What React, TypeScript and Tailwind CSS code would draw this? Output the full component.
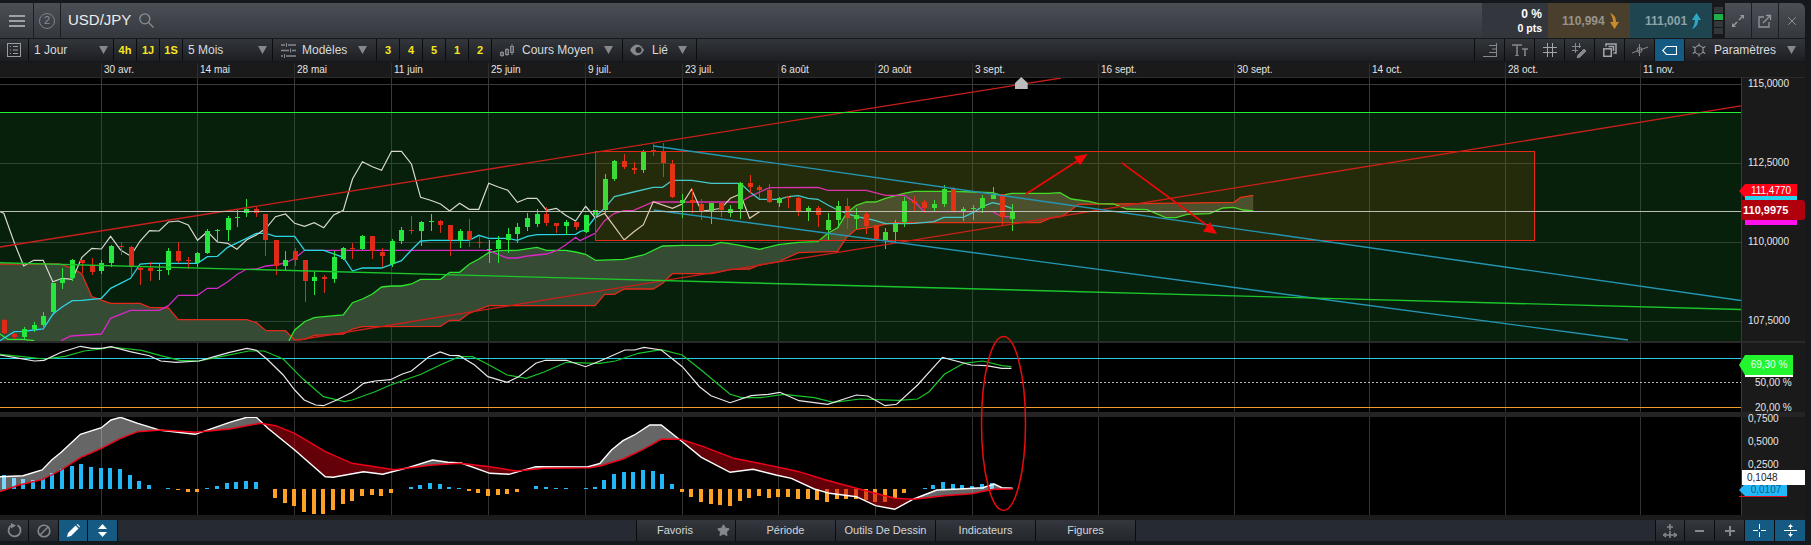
import React from "react";
import { Star, X } from "lucide-react";

type P = number[][];
const z3 = (p: P) => p.map(([x, y]) => [x / 2.613, y / 3 + 130]);
const z4 = (p: P) => p.map(([x, y]) => [x / 2.24 + 580, y / 3 + 130]);
const z6 = (p: P) => p.map(([x, y]) => [x / 2.613, y / 3 + 335]);
const z7 = (p: P) => p.map(([x, y]) => [x / 2.613 + 600, y / 3 + 335]);
const str = (p: P) => p.map(([x, y]) => `${x.toFixed(1)},${y.toFixed(1)}`).join(" ");

const gridX = [101, 197, 294, 391, 488, 585, 682, 778, 875, 972, 1098, 1234, 1369, 1505, 1640];
const dates = ["30 avr.", "14 mai", "28 mai", "11 juin", "25 juin", "9 juil.", "23 juil.", "6 août", "20 août", "3 sept.", "16 sept.", "30 sept.", "14 oct.", "28 oct.", "11 nov."];

// [x, wickTop, bodyTop, bodyBot, wickBot, isGreen]
const c3: number[][] = [
  [11,568,570,610,612,0],[37,608,612,622,628,0],[62,590,598,622,626,1],[88,577,585,598,605,1],[113,545,558,586,592,1],[138,459,459,545,555,1],[163,415,446,458,477,1],[189,388,390,445,452,1],[214,390,390,400,428,0],[240,385,404,426,435,0],[265,390,400,424,432,1],[289,345,348,400,411,1],[315,337,348,351,375,0],[341,349,351,412,438,0],[366,410,414,419,465,0],[391,397,414,423,453,0],[416,402,420,422,450,1],[440,354,363,420,435,1],[466,336,363,393,400,0],[492,381,390,393,417,0],[516,367,369,400,412,1],[542,298,304,370,373,1],[568,297,299,301,336,1],[595,258,264,300,333,1],[619,240,262,264,290,1],[644,207,237,248,261,1],[670,230,238,251,261,0],[693,252,252,330,378,0],[720,330,330,408,435,0],[746,363,390,408,422,1],[770,355,363,390,408,0],[796,390,390,453,516,0],[821,427,442,453,495,1],[846,435,441,446,489,0],[872,363,381,447,459,1],[897,350,354,388,390,1],[921,339,354,357,387,0],[947,315,318,358,360,1],[973,318,318,364,387,0],[997,355,366,378,412,0],[1023,327,333,402,411,1],[1049,291,300,333,342,1],[1075,258,300,303,312,0],[1099,273,276,303,348,1],[1125,252,273,275,303,1],[1151,270,273,285,309,0],[1175,285,285,330,378,0],[1201,297,303,330,354,1],[1226,267,303,330,351,0],[1251,318,336,339,354,0],[1277,330,358,360,398,1],[1302,318,330,357,399,1],[1327,294,312,330,369,1],[1352,280,291,312,339,1],[1378,250,264,291,303,1],[1403,237,252,282,291,1],[1428,232,252,279,288,0],[1454,279,279,288,309,0],[1478,270,276,288,315,1],[1504,276,276,291,300,0],[1530,255,255,306,309,1],[1556,240,240,255,270,1],
];
const c4: number[][] = [
  [55,132,148,240,248,1],[77,90,93,148,154,1],[99,72,93,110,118,0],[120,96,114,120,132,0],[142,60,66,120,129,1],[164,40,60,66,78,0],[185,38,66,100,140,0],[207,90,102,202,205,0],[229,192,210,218,265,1],[250,178,210,220,250,0],[272,208,222,243,270,0],[294,218,220,243,282,1],[316,218,218,238,262,0],[337,225,236,248,262,1],[359,155,160,238,268,1],[380,135,160,172,190,0],[402,165,172,180,205,0],[424,163,180,215,220,0],[445,200,204,220,232,1],[467,198,200,202,235,0],[489,200,204,244,258,0],[511,228,234,244,272,1],[533,228,234,255,290,0],[555,248,270,300,330,1],[577,212,228,270,295,1],[597,205,228,265,296,0],[619,235,254,265,298,1],[641,245,252,288,312,0],[662,285,286,328,332,0],[684,293,306,330,358,1],[706,270,282,306,335,1],[726,200,213,275,290,1],[749,197,213,218,245,0],[771,210,216,234,248,0],[793,210,222,234,245,1],[815,165,178,222,230,1],[836,170,178,245,248,0],[858,230,238,244,272,1],[880,226,234,237,270,1],[901,195,204,234,250,1],[924,170,194,205,208,1],[945,192,192,262,288,0],[967,222,245,265,303,1],
];

const whiteLag = [...z3([[0,245],[10,250],[38,340],[62,408],[88,391],[113,391],[138,455],[163,445],[189,448],[214,382],[240,355],[265,357],[289,319],[315,360],[341,378],[366,333],[391,302],[416,303],[440,276],[466,273],[492,285],[516,331],[542,305],[568,336],[595,340],[619,358],[644,330],[670,315],[695,295],[720,260],[746,252],[770,280],[796,289],[821,278],[846,293],[872,255],[897,241],[921,147],[947,95],[973,110],[997,121],[1023,64],[1049,64],[1075,102],[1099,202],[1125,211],[1151,222],[1175,243],[1201,220],[1226,238],[1251,238],[1277,160],[1302,171],[1327,181],[1352,217],[1378,205],[1403,205],[1428,241],[1454,235],[1478,256],[1504,273],[1530,229]]), ...z4([[12,228],[34,263],[55,250],[77,290],[99,330],[120,306],[142,284],[164,215],[207,235],[229,222],[250,178],[272,243],[294,240],[316,235],[337,205],[359,192],[380,265],[402,245]])];
const cyan = [...z3([[0,632],[37,605],[62,604],[88,600],[113,597],[138,553],[163,530],[189,512],[214,511],[265,505],[289,475],[315,460],[341,445],[366,402],[391,400],[516,400],[542,380],[568,379],[595,352],[644,325],[670,310],[695,310],[720,319],[770,319],[796,361],[846,361],[897,382],[921,423],[947,414],[997,414],[1023,403],[1049,392],[1075,360],[1099,333],[1125,331],[1226,331],[1251,316],[1277,325],[1327,325],[1352,331],[1378,319],[1403,314],[1504,313]]), ...z4([[0,305],[12,300],[34,262],[55,235],[77,200],[120,186],[164,172],[185,172],[207,151],[250,151],[294,160],[359,160],[380,185],[402,208],[445,208],[467,200],[489,197],[511,205],[533,208],[555,225],[577,240],[597,250],[619,260],[641,265],[662,272],[684,281],[726,281],[749,280],[793,275],[815,262],[858,262],[880,248],[901,230],[924,218],[945,224],[967,235]])];
const magenta = [...z3([[160,632],[185,618],[265,612],[289,565],[341,541],[416,541],[440,527],[466,496],[516,496],[542,475],[568,475],[595,455],[620,433],[644,418],[670,417],[695,408],[720,405],[746,399],[770,385],[796,361],[1277,361],[1302,374],[1327,384],[1352,384],[1378,378],[1428,372],[1454,362],[1478,345],[1504,322]]), ...z4([[0,332],[34,310],[55,272],[77,250],[99,242],[120,241],[164,216],[359,216],[380,200],[424,173],[533,172],[555,181],[641,181],[684,196],[726,196],[749,215],[771,245],[924,245],[945,260],[967,260]])];
const spanA0 = z3([[0,612],[20,628],[60,628],[90,632]]);
const spanA = [...z3([[755,632],[770,600],[796,575],[821,563],[846,560],[897,555],[921,518],[947,507],[973,492],[997,471],[1023,468],[1049,468],[1075,462],[1099,448],[1151,448],[1175,427],[1201,427],[1226,403],[1251,387],[1277,368],[1302,362],[1352,361],[1403,352],[1428,361],[1478,361],[1504,366],[1530,373],[1556,391]]), ...z4([[34,391],[99,388],[142,375],[185,348],[229,346],[294,346],[316,337],[359,346],[402,358],[445,344],[489,337],[533,335],[555,310],[577,293],[597,250],[619,226],[641,216],[662,216],[684,205],[726,190],[749,184],[836,184],[880,186],[924,188],[945,196],[967,190],[1050,190],[1075,188],[1100,207],[1140,214],[1161,221],[1195,222],[1225,237],[1270,239],[1312,263],[1335,263],[1360,253],[1410,251],[1440,234],[1465,232],[1485,240],[1508,243]])];
const spanB0 = z3([[0,402],[155,402],[190,415],[214,432],[240,500],[289,520],[366,520],[391,532],[440,534],[466,569],[645,569],[670,578],[695,602],[746,602],[770,630]]);
const spanB = [...z3([[770,630],[796,628],[821,616],[897,612],[921,597],[947,590],[1151,589],[1175,571],[1201,571],[1226,550],[1277,527],[1556,527]]), ...z4([[34,527],[55,493],[77,493],[99,477],[164,477],[185,460],[207,431],[294,431],[316,425],[337,418],[380,417],[402,405],[445,395],[489,368],[577,364],[597,322],[619,298],[662,290],[684,282],[706,278],[1030,278],[1055,264],[1080,259],[1117,223],[1465,217],[1480,202],[1508,196]])];

const stochW = [...z6([[0,60],[40,68],[90,78],[115,76],[160,52],[210,34],[240,40],[265,40],[290,35],[340,50],[390,62],[420,78],[460,82],[520,78],[560,65],[600,52],[645,40],[670,46],[700,75],[740,120],[770,165],[795,195],[825,210],[845,212],[880,195],[920,172],[950,145],[980,138],[1020,134],[1050,118],[1075,108],[1120,66],[1150,51],[1175,61],[1200,62],[1240,90],[1275,125],[1325,142],[1355,125],[1400,85],[1425,76],[1480,76],[1530,95]]), ...z7([[0,78],[65,45],[90,45],[115,37],[160,45],[215,95],[260,155],[290,182],[340,203],[395,182],[440,178],[470,172],[520,197],[595,208],[670,180],[700,183],[745,212],[775,208],[830,150],[895,67],[970,90],[1010,92],[1050,100],[1075,100]])];
const stochG = [...z6([[0,58],[60,65],[115,72],[170,64],[220,48],[265,42],[290,36],[370,46],[420,62],[470,76],[520,78],[590,62],[650,48],[690,48],[740,72],[790,130],[845,185],[900,200],[920,195],[980,170],[1020,150],[1100,118],[1150,90],[1200,65],[1235,65],[1270,85],[1325,120],[1375,130],[1420,112],[1480,82],[1560,85]]), ...z7([[0,85],[40,78],[100,55],[160,44],[215,60],[270,110],[340,178],[370,188],[420,188],[480,178],[560,188],[610,202],[680,192],[780,196],[830,192],[860,170],[900,118],[950,85],[1000,78],[1050,92],[1075,95]])];
const macdW = [...z6([[0,425],[60,422],[110,405],[135,375],[160,352],[210,298],[265,278],[290,255],[315,247],[360,265],[420,286],[510,298],[600,262],[645,247],[670,247],[700,280],[770,345],[850,425],[870,427],[950,410],[1000,418],[1060,400],[1130,375],[1170,382],[1205,384],[1280,415],[1330,418],[1400,395],[1535,396]]), ...z7([[0,385],[30,345],[60,317],[90,300],[130,270],[160,270],[215,320],[265,367],[340,412],[400,403],[460,420],[500,430],[560,462],[600,475],[670,485],[720,512],[770,523],[820,492],[880,465],[940,462],[1000,458],[1030,447],[1050,458],[1078,460]])];
const macdR = [...z6([[0,470],[50,450],[110,434],[160,405],[210,368],[265,340],[315,310],[360,290],[420,285],[510,292],[600,282],[680,265],[720,272],[770,295],[850,350],[920,385],[1030,404],[1130,390],[1200,385],[1280,395],[1350,408],[1420,400],[1540,398]]), ...z7([[0,393],[60,372],[110,345],[160,313],[210,313],[270,335],[350,370],[460,395],[520,410],[590,435],[670,460],[770,490],[820,493],[900,482],[970,476],[1030,463],[1078,462]])];

const barsA: number[][] = [[11,420],[37,429],[60,432],[86,436],[112,432],[137,414],[163,402],[188,393],[212,387],[238,396],[265,399],[288,399],[314,402],[340,420],[364,438],[390,450],[440,459],[465,465],[492,471],[516,471],[541,459],[567,453],[593,444],[617,441],[643,438],[669,441],[718,489],[745,504],[769,513],[795,531],[820,537],[845,537],[870,525],[896,507],[920,498],[946,483],[972,480],[996,483],[1022,474],[1074,456],[1098,450],[1124,444],[1150,447],[1174,456],[1200,459],[1226,468],[1250,474],[1276,483],[1302,480],[1325,477],[1351,471],[1401,453],[1427,456],[1453,459],[1478,459],[1530,459],[1556,456]];
const barsB: number[][] = [[11,435],[36,417],[62,411],[86,411],[112,405],[138,408],[162,417],[188,447],[214,471],[238,486],[264,501],[290,507],[314,510],[340,513],[366,498],[390,489],[416,483],[442,489],[466,486],[492,486],[518,492],[544,492],[568,495],[594,501],[620,492],[644,492],[670,492],[694,495],[718,501],[744,501],[770,489],[794,474],[848,459],[870,450],[896,441],[922,447],[946,450],[972,453],[998,447],[1024,444]];

function Candles({ data, sx, ox }: { data: number[][]; sx: number; ox: number }) {
  return (
    <g shapeRendering="crispEdges">
      {data.map(([x, wt, bt, bb, wb, g], i) => {
        const cx = Math.round(x / sx + ox);
        const col = g ? "#24e83e" : "#e02a18";
        const by = Math.round(bt / 3 + 130);
        return (
          <g key={i} fill={col}>
            <rect x={cx} y={wt / 3 + 130} width={1} height={(wb - wt) / 3} />
            <rect x={cx - 2} y={by} width={5} height={Math.max(1, Math.round((bb - bt) / 3))} />
          </g>
        );
      })}
    </g>
  );
}

function Bars({ data, sx, ox }: { data: number[][]; sx: number; ox: number }) {
  const zero = 462;
  return (
    <g shapeRendering="crispEdges">
      {data.map(([x, t], i) => {
        const up = t < zero;
        const h = Math.max(1, Math.round(Math.abs(zero - t) / 3));
        const cx = Math.round(x / sx + ox);
        return <rect key={i} x={cx - 2} width={4} y={up ? 489 - h : 489} height={h} fill={up ? "#22b8f8" : "#ffa126"} />;
      })}
    </g>
  );
}

function Grid({ y1, y2, color }: { y1: number; y2: number; color: string }) {
  return (
    <g shapeRendering="crispEdges">
      {gridX.map((x) => (
        <line key={x} x1={x + 0.5} x2={x + 0.5} y1={y1} y2={y2} stroke={color} />
      ))}
    </g>
  );
}

function MainChart() {
  const cloud1 = [...spanB0, [spanB0[spanB0.length - 1][0], 341], [0, 341]];
  const cloud2 = [...spanA, ...[...spanB].reverse()];
  return (
    <svg width={1741} height={263} viewBox="0 78 1741 263" className="block shrink-0">
      <rect x={0} y={78} width={1741} height={35} fill="#000" />
      <rect x={0} y={113} width={1741} height={228} fill="#06200c" />
      <Grid y1={78} y2={113} color="#3a3a3a" />
      <Grid y1={113} y2={341} color="#2c4431" />
      <g shapeRendering="crispEdges">
        <line x1={0} x2={1741} y1={84.5} y2={84.5} stroke="#3a3a3a" />
        {[163, 242, 321].map((y) => (
          <line key={y} x1={0} x2={1741} y1={y + 0.5} y2={y + 0.5} stroke="#2c4431" />
        ))}
      </g>
      <polygon points={str(cloud1)} fill="#354b34" />
      <polygon points={str(cloud2)} fill="#354b34" />
      <polyline points={str(spanB0)} fill="none" stroke="#e32a1a" strokeWidth={1.3} />
      <polyline points={str(spanB)} fill="none" stroke="#e32a1a" strokeWidth={1.3} />
      <polyline points={str(spanA0)} fill="none" stroke="#2ee62e" strokeWidth={1.3} />
      <polyline points={str(spanA)} fill="none" stroke="#2ee62e" strokeWidth={1.3} />
      <polyline points={str(magenta)} fill="none" stroke="#d828c8" strokeWidth={1.3} />
      <polyline points={str(cyan)} fill="none" stroke="#2cd4e4" strokeWidth={1.3} />
      <polyline points={str(whiteLag)} fill="none" stroke="#d8d8d0" strokeWidth={1.2} />
      <Candles data={c3} sx={2.613} ox={0} />
      <Candles data={c4} sx={2.24} ox={580} />
      <rect x={595.5} y={151.5} width={939} height={89} fill="#ff7a00" fillOpacity={0.12} stroke="#e5281a" strokeWidth={1} shapeRendering="crispEdges" />
      <line x1={0} y1={247} x2={1061} y2={78} stroke="#c8201a" strokeWidth={1.3} />
      <line x1={298} y1={340} x2={1741} y2={105.8} stroke="#c8201a" strokeWidth={1.3} />
      <line x1={653.7} y1={146} x2={1741} y2={300.5} stroke="#2496b4" strokeWidth={1.4} />
      <line x1={653.7} y1={210} x2={1628} y2={340} stroke="#2496b4" strokeWidth={1.4} />
      <line x1={0} y1={262.7} x2={1741} y2={309.5} stroke="#1cc62c" strokeWidth={1.4} />
      <line x1={0} x2={1741} y1={112.5} y2={112.5} stroke="#22f034" strokeWidth={1} shapeRendering="crispEdges" />
      <line x1={0} x2={1741} y1={211.5} y2={211.5} stroke="#bdbdb5" strokeWidth={1} shapeRendering="crispEdges" />
      <g stroke="#f00808" strokeWidth={1.6} fill="#f00808">
        <line x1={1026} y1={194} x2={1082} y2={158} />
        <polygon points="1087.6,154 1074,156.5 1080,165.5" stroke="none" />
        <line x1={1121.5} y1={162.7} x2={1212} y2={229} />
        <polygon points="1217,234 1203,231.5 1210,222" stroke="none" />
      </g>
    </svg>
  );
}

function StochChart() {
  return (
    <svg width={1741} height={69} viewBox="0 343 1741 69" className="block shrink-0">
      <rect x={0} y={343} width={1741} height={69} fill="#000" />
      <Grid y1={343} y2={412} color="#333" />
      <g shapeRendering="crispEdges">
        <line x1={0} x2={1741} y1={358.5} y2={358.5} stroke="#27cfe0" />
        <line x1={0} x2={1741} y1={382.5} y2={382.5} stroke="#b8b8b8" strokeDasharray="2 2" />
        <line x1={0} x2={1741} y1={407.5} y2={407.5} stroke="#f39a2a" />
      </g>
      <polyline points={str(stochG)} fill="none" stroke="#18c62a" strokeWidth={1.2} />
      <polyline points={str(stochW)} fill="none" stroke="#e8e8e8" strokeWidth={1.2} />
    </svg>
  );
}

function MacdChart() {
  const area = [...macdW, ...[...macdR].reverse()];
  const above = [...macdR, [1741, macdR[macdR.length - 1][1]], [1741, 417], [0, 417]];
  const below = [...macdR, [1741, macdR[macdR.length - 1][1]], [1741, 515], [0, 515]];
  return (
    <svg width={1741} height={98} viewBox="0 417 1741 98" className="block shrink-0">
      <defs>
        <clipPath id="macd-above"><polygon points={str(above)} /></clipPath>
        <clipPath id="macd-below"><polygon points={str(below)} /></clipPath>
      </defs>
      <rect x={0} y={417} width={1741} height={98} fill="#000" />
      <Grid y1={417} y2={515} color="#333" />
      <Bars data={barsA} sx={2.613} ox={0} />
      <Bars data={barsB} sx={2.613} ox={600} />
      <polygon points={str(area)} fill="#ffffff" fillOpacity={0.4} clipPath="url(#macd-above)" />
      <polygon points={str(area)} fill="#c00010" fillOpacity={0.52} clipPath="url(#macd-below)" />
      <polyline points={str(macdW)} fill="none" stroke="#fff" strokeWidth={1.4} />
      <polyline points={str(macdR)} fill="none" stroke="#f00018" strokeWidth={1.4} />
    </svg>
  );
}

const Tri = () => (
  <svg width="9" height="8" viewBox="0 0 9 8" className="shrink-0"><polygon points="0,0 9,0 4.5,8" fill="#85888c" /></svg>
);

const toolBg = "bg-linear-to-b from-[#33363b] to-[#1c1e22]";

function Yel({ t, w }: { t: string; w: string }) {
  return (
    <div className={`${w} h-full flex items-center justify-center text-[11px] font-bold text-[#f5e61e] border-r border-[#0b0c0e]`}>{t}</div>
  );
}

function IconCell({ children, blue }: { children: React.ReactNode; blue?: boolean }) {
  return (
    <div className={`w-[30px] h-full flex items-center justify-center border-l border-[#0b0c0e] ${blue ? "bg-[#155a82]" : ""}`}>{children}</div>
  );
}

function Header() {
  return (
    <div className="h-[35px] flex rounded-tr-[6px] overflow-hidden bg-linear-to-b from-[#4b4f56] to-[#34383e]">
      <div className="w-[34px] flex items-center justify-center border-r border-[#1c1e22]">
        <div className="w-[16px] flex flex-col gap-[3px]">
          <div className="h-[2px] bg-[#9ea0a3]" />
          <div className="h-[2px] bg-[#9ea0a3]" />
          <div className="h-[2px] bg-[#9ea0a3]" />
        </div>
      </div>
      <div className="w-[27px] flex items-center justify-center border-r border-[#1c1e22]">
        <div className="w-[16px] h-[16px] rounded-full border-[1.5px] border-[#808285] flex items-center justify-center text-[11px] text-[#8a8d90]">2</div>
      </div>
      <div className="pl-[7px] flex items-center text-[15px] text-[#eceded]">USD/JPY</div>
      <div className="pl-[8px] flex items-center">
        <svg width="15" height="15" viewBox="0 0 15 15" fill="none" stroke="#8c8f93" strokeWidth="1.3"><circle cx="5.8" cy="5.8" r="5" /><path d="M9.4 9.4L14.5 14.5" /></svg>
      </div>
      <div className="flex-1" />
      <div className="w-[66px] bg-[#33373d] flex flex-col items-end justify-center pr-[6px] font-bold text-white leading-[14px]">
        <div className="text-[12px]">0 %</div>
        <div className="text-[10.5px]">0 pts</div>
      </div>
      <div className="w-[82px] bg-[#4a3e2c] flex items-center pl-[14px] gap-[4px] text-[12px] font-bold text-[#97938a]">
        110,994
        <svg width="11" height="16" viewBox="0 0 11 16"><path d="M1 0C6 2 7 5 7 9H10L5.5 16L1 9H4C4 6 3 3 1 0Z" fill="#c98a2c" /></svg>
      </div>
      <div className="w-[82px] bg-[#1f4650] flex items-center pl-[15px] gap-[4px] text-[12px] font-bold text-[#8ea2a8]">
        111,001
        <svg width="11" height="16" viewBox="0 0 11 16"><path d="M1 16C6 14 7 11 7 7H10L5.5 0L1 7H4C4 10 3 13 1 16Z" fill="#2ea8c6" /></svg>
      </div>
      <div className="w-[13px] bg-[#16181b] flex flex-col justify-center gap-px px-[2px]">
        <div className="h-[6px] bg-[#33373c]" />
        <div className="h-[6px] bg-[#1fb04c]" />
        <div className="h-[6px] bg-[#33373c]" />
        <div className="h-[6px] bg-[#33373c]" />
      </div>
      <div className="w-[27px] flex items-center justify-center border-r border-[#1c1e22]">
        <svg width="14" height="14" viewBox="0 0 14 14" stroke="#94979b" strokeWidth="1.6" fill="#94979b"><line x1="8" y1="6" x2="12" y2="2" /><polygon points="9,1 13,1 13,5" stroke="none" /><line x1="6" y1="8" x2="2" y2="12" /><polygon points="1,9 1,13 5,13" stroke="none" /></svg>
      </div>
      <div className="w-[27px] flex items-center justify-center border-r border-[#1c1e22]">
        <svg width="14" height="14" viewBox="0 0 14 14" stroke="#94979b" strokeWidth="1.3" fill="none"><path d="M6 3H1V13H11V8" /><path d="M5 9L12 2" /><path d="M8 1.5H12.5V6" /></svg>
      </div>
      <div className="w-[26px] flex items-center justify-center"><X size={14} color="#94979b" strokeWidth={1.6} /></div>
    </div>
  );
}

function Toolbar() {
  return (
    <div className={`mt-px h-[22px] flex items-center text-[12px] text-[#d8dadb] ${toolBg}`}>
      <div className="w-[29px] h-full flex items-center justify-center border-r border-[#0b0c0e]">
        <svg width="14" height="14" viewBox="0 0 14 14" fill="none" stroke="#999c9f"><rect x="0.5" y="0.5" width="13" height="13" /><path d="M3 3.5H4M6 3.5H11M3 7H4M6 7H11M3 10.5H4M6 10.5H11" /></svg>
      </div>
      <div className="w-[85px] h-full flex items-center justify-between pl-[5px] pr-[5px] border-r border-[#0b0c0e]"><span>1 Jour</span><Tri /></div>
      <Yel t="4h" w="w-[23px]" />
      <Yel t="1J" w="w-[23px]" />
      <Yel t="1S" w="w-[23px]" />
      <div className="w-[90px] h-full flex items-center justify-between pl-[5px] pr-[5px] border-r border-[#0b0c0e]"><span>5 Mois</span><Tri /></div>
      <div className="w-[104px] h-full flex items-center pl-[8px] border-r border-[#0b0c0e]">
        <svg width="15" height="15" viewBox="0 0 15 15" stroke="#85888c" strokeWidth="1.5" fill="none"><path d="M0 2H4M7 2H15M0 7.5H8M11 7.5H15M0 13H2M5 13H15" /><path d="M5.5 0V4M9.5 5.5V9.5M3.5 11V15" strokeWidth="1" /></svg>
        <span className="ml-[6px]">Modèles</span>
        <span className="ml-[11px]"><Tri /></span>
      </div>
      <Yel t="3" w="w-[23px]" />
      <Yel t="4" w="w-[23px]" />
      <Yel t="5" w="w-[23px]" />
      <Yel t="1" w="w-[23px]" />
      <Yel t="2" w="w-[23px]" />
      <div className="w-[131px] h-full flex items-center pl-[8px] border-r border-[#0b0c0e]">
        <svg width="15" height="15" viewBox="0 0 15 15" stroke="#85888c" fill="none"><rect x="0.5" y="9.5" width="3" height="3" /><path d="M2 8V14M7 5V13M12 1V12" /><rect x="5.5" y="6.5" width="3" height="5" /><rect x="10.5" y="3.5" width="3" height="6" /></svg>
        <span className="ml-[7px]">Cours Moyen</span>
        <span className="ml-[11px]"><Tri /></span>
      </div>
      <div className="w-[74px] h-full flex items-center pl-[7px] border-r border-[#0b0c0e]">
        <svg width="14" height="12" viewBox="0 0 14 12"><path d="M0 6C2 2 5 0.5 7 0.5C10 0.5 12.5 3 14 6C12.5 9 10 11.5 7 11.5C5 11.5 2 10 0 6Z" fill="#85888c" /><circle cx="8.5" cy="6" r="3" fill="#26282c" /></svg>
        <span className="ml-[8px]">Lié</span>
        <span className="ml-[10px]"><Tri /></span>
      </div>
      <div className="flex-1" />
      <IconCell>
        <svg width="14" height="14" viewBox="0 0 14 14" stroke="#85888c" fill="none"><path d="M0 13.5H14M13.5 0V13M6 2.5H13M9 6H13M6 9.5H13" /></svg>
      </IconCell>
      <IconCell>
        <svg width="16" height="12" viewBox="0 0 16 12" stroke="#85888c" strokeWidth="1.5" fill="none"><path d="M0 1H10M5 1V12M3 12H7M10 5H16M13 5V12M12 12H14" /></svg>
      </IconCell>
      <IconCell>
        <svg width="14" height="14" viewBox="0 0 14 14" stroke="#a4a7aa" fill="none"><path d="M0 4.5H14M0 9.5H14M4.5 0V14M9.5 0V14" /></svg>
      </IconCell>
      <IconCell>
        <svg width="15" height="15" viewBox="0 0 15 15" stroke="#85888c" fill="none"><path d="M0 3.5H9M0 7.5H6M3.5 0V10M7.5 0V5" /><path d="M6 12L12 6L14 8L8 14L5 15Z" fill="#85888c" /></svg>
      </IconCell>
      <IconCell>
        <svg width="14" height="14" viewBox="0 0 14 14" stroke="#a4a7aa" strokeWidth="1.5" fill="none"><rect x="0.8" y="5.8" width="7.5" height="7.5" /><path d="M3 3.5V1H13V10H10.5" /><path d="M5.5 3.5H10.5V8" /></svg>
      </IconCell>
      <IconCell>
        <svg width="16" height="13" viewBox="0 0 16 13" stroke="#85888c" fill="none"><path d="M0 9L16 3" /><circle cx="7.5" cy="6" r="2.5" /><path d="M7.5 0V12" /></svg>
      </IconCell>
      <IconCell blue>
        <svg width="15" height="9" viewBox="0 0 15 9" stroke="#fff" strokeWidth="1.1" fill="none"><path d="M14.5 0.5H4.5L0.7 4.5L4.5 8.5H14.5Z" /></svg>
      </IconCell>
      <div className="w-[121px] h-full flex items-center pl-[7px] border-l border-[#0b0c0e]">
        <svg width="14" height="14" viewBox="0 0 16 16" stroke="#9a9da0" strokeWidth="1.3" fill="none"><circle cx="8" cy="8" r="4.8" /><path d="M8 0.5V3M8 13V15.5M0.8 4L3.4 5.5M12.6 10.5L15.2 12M0.8 12L3.4 10.5M12.6 5.5L15.2 4" /></svg>
        <span className="ml-[8px]">Paramètres</span>
        <span className="ml-[11px]"><Tri /></span>
      </div>
    </div>
  );
}

function DateAxis() {
  return (
    <div className="mt-[2px] h-[14px] flex bg-[#1a1a1a] text-[10px] text-[#e4e4e4] leading-[14px]">
      <div className="w-[101px] shrink-0" />
      {dates.map((d, i) => (
        <div key={d} className="pl-[2px] whitespace-nowrap shrink-0 border-l border-[#2e2e2e]" style={{ width: (gridX[i + 1] ?? 1805) - gridX[i] }}>
          {d}
        </div>
      ))}
    </div>
  );
}

function AxisLabel({ cls, children }: { cls: string; children: React.ReactNode }) {
  return <div className={`absolute flex items-center text-[10px] leading-[12px] text-[#e6e6e6] ${cls}`}>{children}</div>;
}

function Tag({ cls, fill, w, children, text }: { cls: string; fill: string; w: string; children?: React.ReactNode; text: string }) {
  return (
    <div className={`absolute flex items-center ${cls}`}>
      <svg width="6" height="100%" viewBox="0 0 6 20" preserveAspectRatio="none" className="shrink-0 self-stretch"><polygon points="6,0 0,10 6,20" fill={fill} /></svg>
      <div className={`${w} h-full flex items-center justify-center text-[10px] leading-none ${text}`} style={{ backgroundColor: fill }}>{children}</div>
    </div>
  );
}

function MainAxis() {
  return (
    <div className="relative flex-1 bg-[#1a1a1a] border-l border-[#3a3a3a]">
      <AxisLabel cls="left-[6px] top-0">115,0000</AxisLabel>
      <AxisLabel cls="left-[6px] top-[79px]">112,5000</AxisLabel>
      <AxisLabel cls="left-[6px] top-[158px]">110,0000</AxisLabel>
      <AxisLabel cls="left-[6px] top-[237px]">107,5000</AxisLabel>
      <Tag cls="-left-[3px] top-[106px] h-[14px]" fill="#ff0018" w="w-[52px]" text="text-white">111,4770</Tag>
      <div className="absolute left-[3px] top-[118px] w-[52px] h-[6px] bg-[#28d4f0]" />
      <div className="absolute left-[3px] top-[142px] w-[52px] h-[5px] bg-[#ff10ee]" />
      <div className="absolute left-0 right-0 top-[122px] h-[20px] bg-[#b0000e] rounded-r-[3px] pl-[1px] flex items-center text-[11px] font-bold text-white">110,9975</div>
    </div>
  );
}

function StochAxis() {
  return (
    <div className="relative flex-1 bg-[#1a1a1a] border-l border-[#3a3a3a]">
      <Tag cls="-left-[3px] top-[12px] h-[20px]" fill="#22f52e" w="w-[48px]" text="text-[#e8ffe8]">69,30 %</Tag>
      <div className="absolute left-[3px] top-[32px] w-[48px] h-[2px] bg-white" />
      <AxisLabel cls="top-[34px] left-[13px]">50,00 %</AxisLabel>
      <AxisLabel cls="top-[59px] left-[13px]">20,00 %</AxisLabel>
    </div>
  );
}

function MacdAxis() {
  return (
    <div className="relative flex-1 bg-[#1a1a1a] border-l border-[#3a3a3a]">
      <AxisLabel cls="left-[6px] -top-[4px]">0,7500</AxisLabel>
      <AxisLabel cls="left-[6px] top-[19px]">0,5000</AxisLabel>
      <AxisLabel cls="left-[6px] top-[42px]">0,2500</AxisLabel>
      <Tag cls="-left-[3px] top-[67px] h-[13px] border-b border-[#e01020]" fill="#22b8f8" w="w-[42px]" text="text-[#115a80]">0,0107</Tag>
      <div className="absolute left-0 right-0 top-[53px] h-[15px] bg-white pl-[5px] flex items-center text-[10px] text-[#222]">0,1048</div>
    </div>
  );
}

const bottomBtn = "h-full flex items-center justify-center border-r border-[#0b0c0e] bg-linear-to-b from-[#34383e] to-[#23262b]";

function BottomBar() {
  return (
    <div className="h-[21px] flex items-center bg-[#262b33] text-[11px] text-[#d4d6d8]">
      <div className={`w-[29px] ${bottomBtn}`}>
        <svg width="15" height="15" viewBox="0 0 15 15" fill="none" stroke="#85888c" strokeWidth="1.8"><path d="M10.5 2.2A6 6 0 1 1 5 2" /><polygon points="4,0 9,2.5 4,5.5" fill="#85888c" stroke="none" /></svg>
      </div>
      <div className={`w-[30px] ${bottomBtn}`}>
        <svg width="14" height="14" viewBox="0 0 14 14" fill="none" stroke="#85888c" strokeWidth="1.6"><circle cx="7" cy="7" r="5.8" /><path d="M3 11L11 3" /></svg>
      </div>
      <div className="w-[29px] h-full flex items-center justify-center bg-[#155a82] border-r border-[#0b0c0e]">
        <svg width="13" height="13" viewBox="0 0 13 13" fill="#fff"><path d="M0 13L1 9L8.5 1.5L11.5 4.5L4 12Z" /><path d="M9.5 0.5L10.5 0L13 2.5L12.5 3.5Z" /></svg>
      </div>
      <div className="w-[30px] h-full flex items-center justify-center bg-[#155a82] border-r border-[#0b0c0e]">
        <svg width="11" height="13" viewBox="0 0 11 13" fill="#fff"><polygon points="5.5,0 10,5 1,5" /><polygon points="1,8 10,8 5.5,13" /></svg>
      </div>
      <div className="w-[518px] h-full" />
      <div className={`w-[100px] relative pl-[20px] !justify-start border-l border-[#0b0c0e] ${bottomBtn}`}>
        Favoris
        <Star size={13} fill="#85888c" color="#85888c" className="absolute right-[5px]" />
      </div>
      <div className={`w-[100px] ${bottomBtn}`}>Période</div>
      <div className={`w-[100px] ${bottomBtn}`}>Outils De Dessin</div>
      <div className={`w-[100px] ${bottomBtn}`}>Indicateurs</div>
      <div className={`w-[100px] ${bottomBtn}`}>Figures</div>
      <div className="flex-1" />
      <div className={`w-[30px] border-l border-[#0b0c0e] ${bottomBtn}`}>
        <svg width="14" height="14" viewBox="0 0 14 14" fill="none" stroke="#85888c" strokeWidth="1.6"><path d="M7 0V6M4 3H10M0 11H14M7 7V14" /><path d="M3 9L0.5 11L3 13M11 9L13.5 11L11 13" /></svg>
      </div>
      <div className={`w-[30px] ${bottomBtn}`}><div className="w-[9px] h-[2px] bg-[#85888c]" /></div>
      <div className={`w-[30px] ${bottomBtn}`}>
        <svg width="10" height="10" viewBox="0 0 10 10" stroke="#85888c" strokeWidth="2"><path d="M0 5H10M5 0V10" /></svg>
      </div>
      <div className="w-[30px] h-full flex items-center justify-center bg-[#155a82] border-r border-[#0b0c0e]">
        <svg width="13" height="13" viewBox="0 0 13 13" stroke="#fff" strokeWidth="1"><path d="M0 6.5H5M8 6.5H13M6.5 0V5M6.5 8V13" /></svg>
      </div>
      <div className="w-[30px] h-full flex items-center justify-center bg-[#155a82]">
        <svg width="13" height="13" viewBox="0 0 13 13" stroke="#fff" fill="#fff" strokeWidth="1"><path d="M0 6.5H13M6.5 1V5M6.5 8V12" /><polygon points="6.5,0 9,3 4,3" stroke="none" /><polygon points="6.5,13 9,10 4,10" stroke="none" /></svg>
      </div>
    </div>
  );
}

export default function App() {
  return (
    <div className="relative w-[1811px] h-[545px] overflow-hidden bg-[#15181c] pt-[3px] font-['Liberation_Sans',Arial,sans-serif]">
      <div className="w-[1805px] flex flex-col">
        <Header />
        <Toolbar />
        <DateAxis />
        <div className="h-px bg-[#2a2a2a]" />
        <div className="flex h-[263px]">
          <MainChart />
          <MainAxis />
        </div>
        <div className="h-[2px] bg-[#2a2a2a]" />
        <div className="flex h-[69px]">
          <StochChart />
          <StochAxis />
        </div>
        <div className="h-[5px] bg-[#242424]" />
        <div className="flex h-[98px]">
          <MacdChart />
          <MacdAxis />
        </div>
        <div className="h-[5px] bg-[#1c1c1c]" />
        <BottomBar />
      </div>
      <svg width="1811" height="545" className="absolute inset-0 pointer-events-none">
        <polygon points="1015,83 1021.3,77 1027.7,83 1027.7,89 1015,89" fill="#bcbcbc" />
        <ellipse cx={1003.5} cy={423.5} rx={22} ry={87} fill="none" stroke="#e80c0c" strokeWidth={1.5} />
      </svg>
    </div>
  );
}
